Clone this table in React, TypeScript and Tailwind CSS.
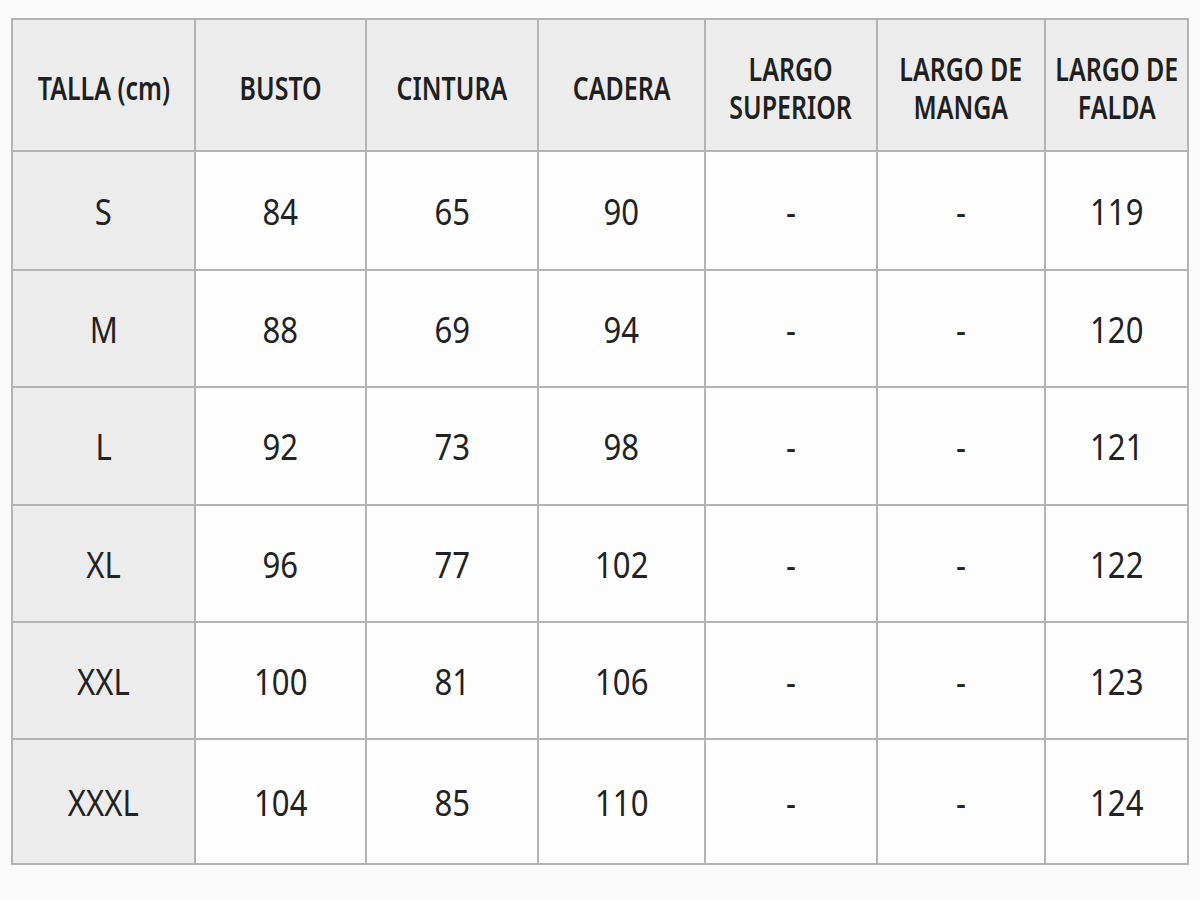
import React from 'react';

const headers = ['TALLA (cm)', 'BUSTO', 'CINTURA', 'CADERA', 'LARGO\nSUPERIOR', 'LARGO DE\nMANGA', 'LARGO DE\nFALDA'];

const rows: string[][] = [
  ['S', '84', '65', '90', '-', '-', '119'],
  ['M', '88', '69', '94', '-', '-', '120'],
  ['L', '92', '73', '98', '-', '-', '121'],
  ['XL', '96', '77', '102', '-', '-', '122'],
  ['XXL', '100', '81', '106', '-', '-', '123'],
  ['XXXL', '104', '85', '110', '-', '-', '124'],
];

// the sheet uses a condensed sans; Noto Sans squeezed horizontally comes closest
const font = { fontFamily: '"Noto Sans", "Open Sans", sans-serif' };

export default function App() {
  return (
    <div className="w-[1200px] h-[900px] bg-[#fbfbfb] pt-[18px] pl-[11px]" style={font}>
      <div className="grid w-[1178px] grid-cols-[181px_169px_170px_165px_170px_166px_141px] grid-rows-[130px_117px_115px_116px_115px_115px_123px] gap-[2px] bg-[#b3b3b5] p-[2px]">
        {headers.map((h) => (
          <div key={h} className="flex items-center justify-center bg-[#ececed] pt-[6px]">
            <span className="block whitespace-pre text-center text-[32px] leading-[38px] font-semibold text-[#1f1f1f] scale-x-[0.78]">
              {h}
            </span>
          </div>
        ))}
        {rows.map((row) =>
          row.map((cell, i) => (
            <div
              key={row[0] + i}
              className={
                'flex items-center justify-center text-[37px] text-[#222222] ' +
                (i === 0 ? 'bg-[#ececed]' : 'bg-[#fdfdfd]')
              }
            >
              <span className="inline-block whitespace-nowrap scale-x-[0.84]">{cell}</span>
            </div>
          ))
        )}
      </div>
    </div>
  );
}
